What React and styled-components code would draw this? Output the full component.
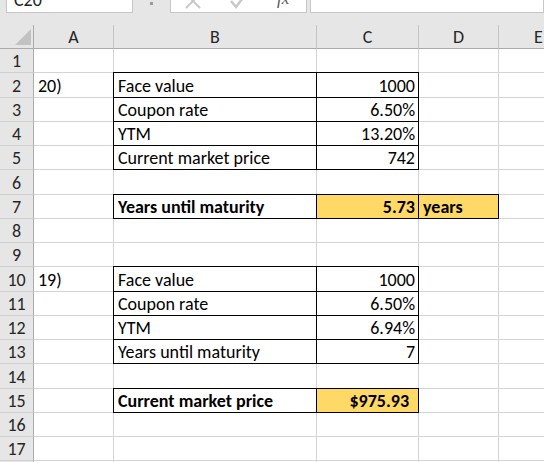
import React from "react";
import styled, { createGlobalStyle, css } from "styled-components";

const GlobalStyle = createGlobalStyle`
  html, body { margin: 0; padding: 0; overflow: hidden; background: #e6e6e6; }
  * { box-sizing: border-box; }
  body { font-family: Carlito, Calibri, Lato, "Liberation Sans", sans-serif; }
`;

const Window = styled.div`
  width: 544px;
  height: 462px;
  overflow: hidden;
  background: #e6e6e6;
  display: flex;
  flex-direction: column;
`;

const FormulaBar = styled.div`
  height: 13px;
  display: flex;
  align-items: flex-end;
  overflow: hidden;
  flex: none;
`;

const Field = styled.div`
  height: 30px;
  background: #fff;
  border: 1px solid #c6c6c6;
  display: flex;
  align-items: flex-end;
  flex: none;
`;

const NameBox = styled(Field)`
  margin-left: 6px;
  width: 127px;
  padding: 0 0 3px 7px;
  font-size: 18px;
  line-height: 18px;
  color: #222;
`;

const Grip = styled.div`
  width: 37px;
  height: 30px;
  flex: none;
  display: flex;
  justify-content: center;
  align-items: flex-end;
  padding-bottom: 8px;
  &::before {
    content: "";
    width: 3px;
    height: 3px;
    background: #9a9a9a;
    box-shadow: 0 -6px 0 #9a9a9a, 0 -12px 0 #9a9a9a;
  }
`;

const FxBox = styled(Field)`
  width: 137px;
  align-items: center;
`;

const IconSlot = styled.div`
  margin-left: ${(p) => p.$ml}px;
  display: flex;
  align-items: center;
  color: ${(p) => p.$color};
  margin-top: 6px;
`;

const FxText = styled.span`
  font-family: "Liberation Serif", serif;
  font-style: italic;
  font-size: 17px;
  color: #555;
  margin-left: 30px;
  margin-top: 2px;
`;

const InputBox = styled(Field)`
  margin-left: 3px;
  flex: 1;
`;

const Sheet = styled.div`
  margin-top: 12px;
  display: grid;
  grid-template-columns: 34px 80px 203px 102px 80px 80px;
  grid-template-rows: 24px repeat(18, 24.25px);
  background: #fff;
`;

const HeaderBase = css`
  background: #e6e6e6;
  color: #262626;
  font-size: 18px;
  line-height: 20px;
  display: flex;
  align-items: flex-end;
  justify-content: center;
  padding-bottom: 1px;
`;

const Corner = styled.div`
  ${HeaderBase};
  border-right: 1px solid #ababab;
  border-bottom: 1px solid #ababab;
  justify-content: flex-end;
  align-items: flex-end;
  padding: 0 2px 3px 0;
  &::before {
    content: "";
    width: 0;
    height: 0;
    border-left: 16px solid transparent;
    border-bottom: 16px solid #c2c2c2;
  }
`;

const ColHeader = styled.div`
  ${HeaderBase};
  border-right: 1px solid #c4c4c4;
  border-bottom: 1px solid #ababab;
`;

const RowHeader = styled.div`
  ${HeaderBase};
  border-right: 1px solid #ababab;
  border-bottom: 1px solid #cfcfcf;
`;

const Cell = styled.div`
  position: relative;
  border-right: 1px solid #d4d4d4;
  border-bottom: 1px solid #d4d4d4;
  background: ${(p) => (p.$fill ? "#ffd966" : "#fff")};
  font-size: 18px;
  line-height: 20px;
  color: #000;
  font-weight: ${(p) => (p.$bold ? 700 : 400)};
  display: flex;
  align-items: flex-end;
  justify-content: ${(p) => (p.$right ? "flex-end" : "flex-start")};
  padding: 0 ${(p) => (p.$currency ? 9 : 3)}px 1px 4px;
  white-space: nowrap;
  ${(p) =>
    p.$boxed &&
    css`
      &::after {
        content: "";
        position: absolute;
        top: -1px;
        left: -1px;
        right: -1px;
        bottom: -1px;
        border: 1px solid #000;
        pointer-events: none;
      }
    `}
`;

const XIcon = () => (
  <svg width="18" height="18" viewBox="0 0 18 18">
    <path d="M2 2 L16 16 M16 2 L2 16" stroke="currentColor" strokeWidth="2" fill="none" />
  </svg>
);

const CheckIcon = () => (
  <svg width="18" height="18" viewBox="0 0 18 18">
    <path d="M2 9 L7 15 L16 3" stroke="currentColor" strokeWidth="2.5" fill="none" />
  </svg>
);

const cols = ["A", "B", "C", "D", "E"];

const data = {
  2: { A: { t: "20)" }, B: { t: "Face value", boxed: 1 }, C: { t: "1000", boxed: 1, right: 1 } },
  3: { B: { t: "Coupon rate", boxed: 1 }, C: { t: "6.50%", boxed: 1, right: 1 } },
  4: { B: { t: "YTM", boxed: 1 }, C: { t: "13.20%", boxed: 1, right: 1 } },
  5: { B: { t: "Current market price", boxed: 1 }, C: { t: "742", boxed: 1, right: 1 } },
  7: {
    B: { t: "Years until maturity", boxed: 1, bold: 1 },
    C: { t: "5.73", boxed: 1, right: 1, bold: 1, fill: 1 },
    D: { t: "years", boxed: 1, bold: 1, fill: 1 },
  },
  10: { A: { t: "19)" }, B: { t: "Face value", boxed: 1 }, C: { t: "1000", boxed: 1, right: 1 } },
  11: { B: { t: "Coupon rate", boxed: 1 }, C: { t: "6.50%", boxed: 1, right: 1 } },
  12: { B: { t: "YTM", boxed: 1 }, C: { t: "6.94%", boxed: 1, right: 1 } },
  13: { B: { t: "Years until maturity", boxed: 1 }, C: { t: "7", boxed: 1, right: 1 } },
  15: {
    B: { t: "Current market price", boxed: 1, bold: 1 },
    C: { t: "$975.93", boxed: 1, right: 1, bold: 1, fill: 1, currency: 1 },
  },
};

export default function App() {
  const rows = Array.from({ length: 18 }, (_, i) => i + 1);
  return (
    <Window>
      <GlobalStyle />
      <FormulaBar>
        <NameBox>C20</NameBox>
        <Grip />
        <FxBox>
          <IconSlot $ml={13} $color="#c8c8c8">
            <XIcon />
          </IconSlot>
          <IconSlot $ml={27} $color="#c8c8c8">
            <CheckIcon />
          </IconSlot>
          <FxText>fx</FxText>
        </FxBox>
        <InputBox />
      </FormulaBar>
      <Sheet>
        <Corner />
        {cols.map((c) => (
          <ColHeader key={c}>{c}</ColHeader>
        ))}
        {rows.map((r) => (
          <React.Fragment key={r}>
            <RowHeader>{r <= 17 ? r : ""}</RowHeader>
            {cols.map((c) => {
              const d = data[r] && data[r][c];
              return (
                <Cell
                  key={c}
                  $boxed={d && d.boxed}
                  $right={d && d.right}
                  $bold={d && d.bold}
                  $fill={d && d.fill}
                  $currency={d && d.currency}
                >
                  {d ? d.t : ""}
                </Cell>
              );
            })}
          </React.Fragment>
        ))}
      </Sheet>
    </Window>
  );
}
